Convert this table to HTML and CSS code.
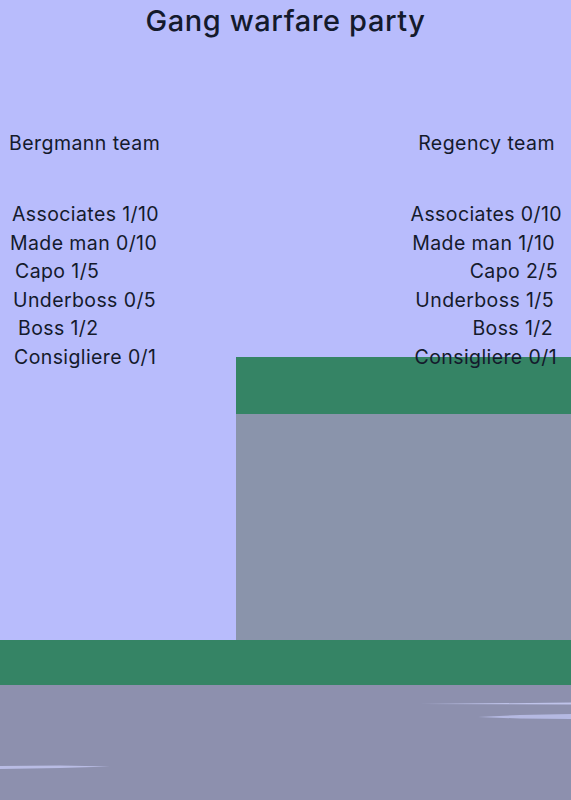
FILE: index.html
```html
<!DOCTYPE html>
<html>

<head>
  <link rel="stylesheet" href="styles.css">
</head>

<body>
  <div class="page">
    <div class="scene">
      <div class="building">
        <div class="roof"></div>
        <div class="wall"></div>
      </div>
      <div class="ground"></div>
      <div class="road">
        <svg class="streaks" width="571" height="115" viewBox="0 0 571 115">
          <polygon points="420,19 571,17.5 571,19.5" fill="#bfc3ea" />
          <polygon points="478,32 520,30 571,29 571,34 520,33.5" fill="#b5b9e2" />
          <polygon points="0,81 60,80.5 110,81.5 60,83 0,84" fill="#b9bce4" />
        </svg>
      </div>
    </div>

    <h1 class="title">Gang warfare party</h1>

    <div class="teams">
      <div class="team team-left">
        <h2 class="team-name">Bergmann team</h2>
        <ul class="ranks">
          <li class="nudge-2">Associates 1/10</li>
          <li>Made man 0/10</li>
          <li class="nudge-5">Capo 1/5</li>
          <li class="nudge-3">Underboss 0/5</li>
          <li class="nudge-8">Boss 1/2</li>
          <li class="nudge-4">Consigliere 0/1</li>
        </ul>
      </div>
      <div class="team team-right">
        <h2 class="team-name">Regency team</h2>
        <ul class="ranks">
          <li>Associates 0/10</li>
          <li class="pull-7">Made man 1/10</li>
          <li class="pull-4">Capo 2/5</li>
          <li class="pull-8">Underboss 1/5</li>
          <li class="pull-9">Boss 1/2</li>
          <li class="pull-5">Consigliere 0/1</li>
        </ul>
      </div>
    </div>
  </div>
</body>

</html>
```

FILE: styles.css
```css
body {
  margin: 0;
  background-color: #B8BCFC;
  font-family: 'Inter', sans-serif;
  color: #141a2c;
}

.page {
  position: relative;
  height: 800px;
  overflow: hidden;
}

/* game scene drawn behind the score board */
.scene {
  position: absolute;
  top: 357px;
  left: 0;
  right: 0;
  bottom: 0;
  display: flex;
  flex-direction: column;
  z-index: 0;
}

.building {
  margin-left: 236px;
  display: flex;
  flex-direction: column;
}

.roof {
  height: 57px;
  background-color: #358465;
}

.wall {
  height: 226px;
  background-color: #8A94AB;
}

.ground {
  height: 45px;
  background-color: #358465;
}

.road {
  flex: 1;
  background-color: #8D90AE;
}

.streaks {
  display: block;
}

.title {
  position: relative;
  z-index: 1;
  margin: 0;
  padding-top: 3px;
  text-align: center;
  font-size: 29px;
  font-weight: 500;
  letter-spacing: 0.6px;
  line-height: 36px;
}

.teams {
  position: relative;
  z-index: 1;
  display: flex;
  justify-content: space-between;
  padding: 0 14px 0 9px;
  margin-top: 92px;
}

.team-name {
  margin: 0 0 45px 0;
  font-size: 19.5px;
  font-weight: 400;
  letter-spacing: 0.45px;
  line-height: 24px;
}

.team-right .team-name {
  margin-right: 2px;
}

.ranks {
  list-style: none;
  margin: 0;
  padding: 0;
  font-size: 19.5px;
  letter-spacing: 0.4px;
  line-height: 28.6px;
}

.team-left .ranks {
  margin-left: 1px;
}

.team-right {
  text-align: right;
}

.team-right .ranks {
  margin-right: -5px;
}

.nudge-2 { padding-left: 2px; }
.nudge-3 { padding-left: 3px; }
.nudge-4 { padding-left: 4px; }
.nudge-5 { padding-left: 5px; }
.nudge-8 { padding-left: 8px; }

.pull-4 { padding-right: 4px; }
.pull-5 { padding-right: 5px; }
.pull-7 { padding-right: 7px; }
.pull-8 { padding-right: 8px; }
.pull-9 { padding-right: 9px; }
```
